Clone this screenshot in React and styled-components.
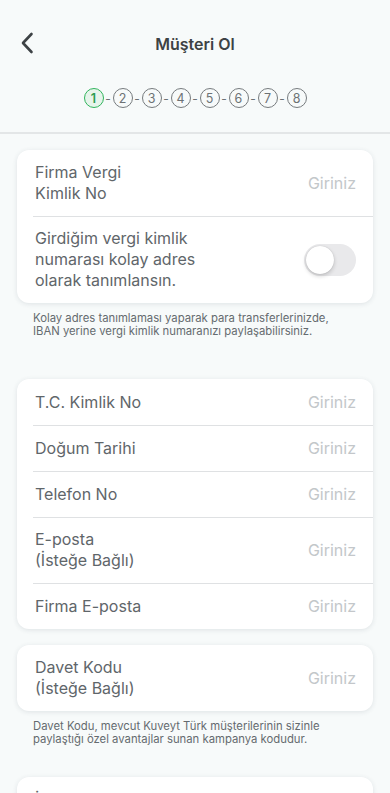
import React, { useState } from 'react';
import styled, { createGlobalStyle } from 'styled-components';

const GlobalStyle = createGlobalStyle`
  html, body {
    margin: 0;
    padding: 0;
    background: #f7fafa;
  }
  body {
    font-family: Inter, "Noto Sans", Roboto, sans-serif;
    -webkit-font-smoothing: antialiased;
  }
`;

const Page = styled.div`
  width: 390px;
  height: 793px;
  overflow: hidden;
  background: #f7fafa;
`;

const Header = styled.div`
  height: 88px;
  display: flex;
  align-items: center;
  justify-content: center;
  position: relative;
`;

const BackButton = styled.button`
  position: absolute;
  left: 14px;
  top: 30px;
  width: 26px;
  height: 26px;
  padding: 0;
  border: 0;
  background: none;
  display: flex;
  align-items: center;
  justify-content: center;
`;

const Title = styled.h1`
  margin: 0;
  font-size: 16px;
  font-weight: 600;
  color: #3d4245;
`;

const Steps = styled.div`
  display: flex;
  align-items: center;
  justify-content: center;
  padding-bottom: 24px;
  border-bottom: 2px solid #e3e6e7;
`;

const StepCircle = styled.div`
  width: 18px;
  height: 18px;
  border-radius: 50%;
  border: 1px solid ${(p) => (p.$active ? '#30b45c' : '#767b7e')};
  background: ${(p) => (p.$active ? '#e6f4eb' : 'transparent')};
  color: ${(p) => (p.$active ? '#2c9c52' : '#6d7275')};
  font-size: 12.5px;
  font-weight: ${(p) => (p.$active ? 600 : 400)};
  display: flex;
  align-items: center;
  justify-content: center;
`;

const Dash = styled.span`
  width: 9px;
  text-align: center;
  font-size: 12px;
  color: #6d7275;
`;

const Content = styled.div`
  padding: 16px 17px 0;
`;

const Card = styled.div`
  background: #fff;
  border-radius: 12px;
  box-shadow: 0 1px 5px rgba(40, 60, 70, 0.12);
  overflow: hidden;
`;

const Row = styled.div`
  display: flex;
  align-items: center;
  justify-content: space-between;
  padding: 12px 17px 12px 18px;
  min-height: 22px;
  position: relative;

  & + &::before {
    content: '';
    position: absolute;
    top: 0;
    left: 16px;
    right: 0;
    height: 1px;
    background: #dfe1e3;
  }
`;

const Label = styled.span`
  font-size: 16px;
  line-height: 21px;
  color: #5f666a;
  max-width: ${(p) => p.$max || 'none'};
`;

const Placeholder = styled.span`
  font-size: 16px;
  color: #c3c7ca;
`;

const Toggle = styled.div`
  width: 52px;
  height: 32px;
  border-radius: 16px;
  background: #e9e9eb;
  padding: 2px;
  box-sizing: border-box;
`;

const Knob = styled.div`
  width: 28px;
  height: 28px;
  border-radius: 50%;
  background: #fff;
  box-shadow: 0 2px 4px rgba(0, 0, 0, 0.18), 0 0 1px rgba(0, 0, 0, 0.2);
`;

const Note = styled.p`
  margin: 0;
  padding: 9px 16px 0;
  font-size: 11.3px;
  line-height: 13px;
  color: #656b6f;
  white-space: nowrap;
`;

const Spacer = styled.div`
  height: ${(p) => p.$h}px;
`;

const Field = ({ label, max }) => (
  <Row>
    <Label $max={max}>{label}</Label>
    <Placeholder>Giriniz</Placeholder>
  </Row>
);

export default function App() {
  const [on, setOn] = useState(false);
  const steps = [1, 2, 3, 4, 5, 6, 7, 8];

  return (
    <Page>
      <GlobalStyle />
      <Header>
        <BackButton aria-label="Geri">
          <svg width="14" height="22" viewBox="0 0 14 22">
            <path d="M11.5 2 L3 11 L11.5 20" fill="none" stroke="#3d4245" strokeWidth="2.6" strokeLinecap="round" strokeLinejoin="round" />
          </svg>
        </BackButton>
        <Title>Müşteri Ol</Title>
      </Header>
      <Steps>
        {steps.map((n, i) => (
          <React.Fragment key={n}>
            {i > 0 && <Dash>-</Dash>}
            <StepCircle $active={n === 1}>{n}</StepCircle>
          </React.Fragment>
        ))}
      </Steps>

      <Content>
        <Card>
          <Field label={<>Firma Vergi<br />Kimlik No</>} />
          <Row onClick={() => setOn(!on)}>
            <Label $max="200px">Girdiğim vergi kimlik numarası kolay adres olarak tanımlansın.</Label>
            <Toggle>
              <Knob style={{ marginLeft: on ? 20 : 0 }} />
            </Toggle>
          </Row>
        </Card>
        <Note>
          Kolay adres tanımlaması yaparak para transferlerinizde,<br />
          IBAN yerine vergi kimlik numaranızı paylaşabilirsiniz.
        </Note>

        <Spacer $h={41} />

        <Card>
          <Field label="T.C. Kimlik No" />
          <Field label="Doğum Tarihi" />
          <Field label="Telefon No" />
          <Field label={<>E-posta<br />(İsteğe Bağlı)</>} />
          <Field label="Firma E-posta" />
        </Card>

        <Spacer $h={16} />

        <Card>
          <Field label={<>Davet Kodu<br />(İsteğe Bağlı)</>} />
        </Card>
        <Note>
          Davet Kodu, mevcut Kuveyt Türk müşterilerinin sizinle<br />
          paylaştığı özel avantajlar sunan kampanya kodudur.
        </Note>

        <Spacer $h={31} />

        <Card>
          <Field label="İşyeri Adresi" />
        </Card>
      </Content>
    </Page>
  );
}
